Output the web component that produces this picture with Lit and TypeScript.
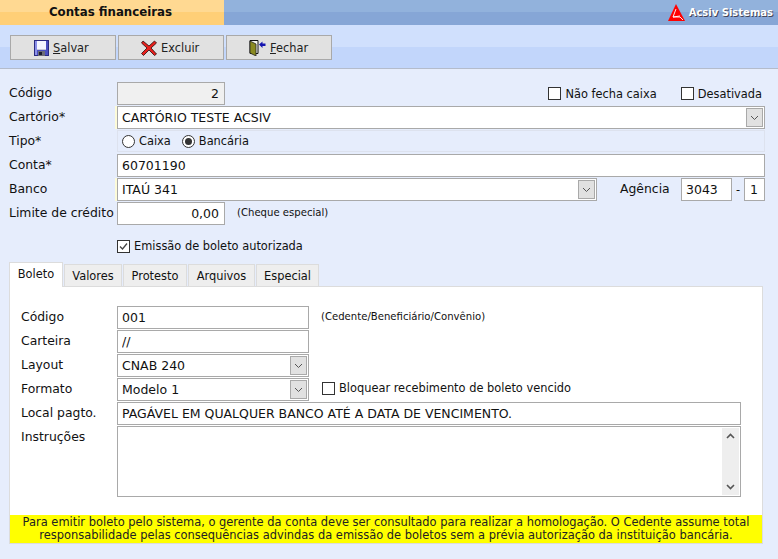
import { html, css, LitElement, svg } from 'lit';
import { customElement, state } from 'lit/decorators.js';

const chevron = html`<svg width="9" height="6" viewBox="0 0 9 6"><path d="M1 1l3.5 3.5L8 1" fill="none" stroke="#555" stroke-width="1"/></svg>`;

const saveIcon = html`<svg class="ico" width="15" height="16" viewBox="0 0 15 16">
  <rect x="0.5" y="0.5" width="14" height="15" fill="#4a4fc0" stroke="#2a2a80"/>
  <rect x="1" y="1" width="2" height="14" fill="#8a8fe8"/>
  <rect x="3" y="1" width="9" height="8" fill="#f4f6ff"/>
  <rect x="3" y="9" width="9" height="1" fill="#c8cad8"/>
  <rect x="4" y="11" width="7" height="5" fill="#6c6c78"/>
  <rect x="5" y="12" width="3" height="3" fill="#1c1c30"/>
</svg>`;

const deleteIcon = html`<svg class="ico" width="16" height="16" viewBox="0 0 16 16">
  <path d="M2 1L8 6l5.500-5 2 2L10 8l5.500 6-2 1.500L8 10l-5.500 5.500-2-2L6 8 .5 3z" fill="#e8201c" stroke="#2a0c0c" stroke-width="0.8"/>
</svg>`;

const exitIcon = html`<svg class="ico" width="17" height="16" viewBox="0 0 17 16">
  <path d="M1 0.500h8v13H1z" fill="#f6f6ee" stroke="#111"/>
  <path d="M1 1l6 3v12l-6-3z" fill="#8a8a20" stroke="#222" stroke-width="0.8"/>
  <path d="M10 4.500l3.500-3V3.500h3v2.500h-3V8z" fill="#1414b0"/>
</svg>`;

const logo = html`<svg width="17" height="17" viewBox="0 0 17 17">
  <path d="M8 0L17 17H0z" fill="#f00"/>
  ${svg`<path d="M8 5L5 13h7l3 3M5 13l7-1" fill="none" stroke="#fff" stroke-width="0.9"/>`}
</svg>`;

@customElement('app-root')
export class AppRoot extends LitElement {

  static styles = [css`
    :host {
      display: block;
      min-height: 559px;
      background: #e6edfc;
      font-family: "DejaVu Sans", Verdana, sans-serif;
      font-size: 11.4px;
      color: #111;
      overflow: hidden;
    }

    .title {
      display: flex;
      height: 25px;
      background: linear-gradient(#92b2dc 0 12px, #86a6d6 12px);
    }
    .title h1 {
      box-sizing: border-box;
      width: 224px;
      margin: 0;
      padding-right: 3px;
      font-size: 11.8px;
      font-weight: bold;
      line-height: 24px;
      text-align: center;
      background: linear-gradient(#ffd992 0 12px, #ffcf77 12px);
    }
    .brand {
      margin-left: auto;
      display: flex;
      align-items: center;
      gap: 4px;
      padding-right: 5px;
      font-weight: bold;
      color: #fff;
      text-shadow: 1px 1px 0 #445;
      font-size: 10px;
    }

    .toolbar {
      display: flex;
      gap: 2px;
      height: 44px;
      box-sizing: border-box;
      padding: 10px 10px 0;
      background: linear-gradient(#d0e0fd 0 22px, #c2d6fb 22px);
      border-bottom: 1px solid #b4bccb;
    }
    .toolbar button {
      display: flex;
      align-items: center;
      gap: 4px;
      width: 106px;
      height: 25px;
      padding: 0 0 0 22px;
      background: #e1e1e1;
      border: 1px solid #a9a9a9;
      font: inherit;
      color: #222;
    }
    .toolbar button:first-child { padding-left: 23px; }

    .form {
      display: grid;
      grid-template-columns: 108px 1fr;
      grid-auto-rows: 23px;
      row-gap: 1px;
      padding: 13px 13px 0 9px;
    }
    .lbl {
      line-height: 21px;
      font-size: 12.4px;
      white-space: nowrap;
    }
    .line {
      display: flex;
      align-items: center;
      min-width: 0;
    }

    input.f, .sel, .area {
      box-sizing: border-box;
      height: 23px;
      border: 1px solid #a9a9a9;
      background: #fff;
      font: inherit;
      font-size: 12.5px;
      color: #111;
      padding: 0 4px;
      margin: 0;
      outline: none;
      min-width: 0;
    }
    input.f { display: block; width: 100%; }
    input.num { text-align: right; padding-right: 5px; }
    input.ro { background: #f0f0f0; }
    input.code { width: 108px; flex: none; }
    input.short, .sel.short { width: 192px; flex: none; }

    .sel {
      display: flex;
      align-items: center;
      justify-content: space-between;
      padding-right: 1px;
      width: 100%;
    }
    .sel.req { box-shadow: -2px 0 0 #fdfbd8; }
    .sel i {
      display: flex;
      align-items: center;
      justify-content: center;
      box-sizing: border-box;
      width: 17px;
      height: 19px;
      background: #e1e1e1;
      border: 1px solid #a9a9a9;
    }

    .chk {
      display: inline-flex;
      align-items: center;
      gap: 4px;
      white-space: nowrap;
    }
    .box {
      box-sizing: border-box;
      width: 13px;
      height: 13px;
      border: 1px solid #333;
      background: #fff;
      display: block;
      flex: none;
    }
    .radio {
      box-sizing: border-box;
      width: 13px;
      height: 13px;
      border: 1px solid #333;
      border-radius: 50%;
      background: #fff;
      display: flex;
      align-items: center;
      justify-content: center;
      flex: none;
    }
    .radio.on::after {
      content: "";
      width: 7px;
      height: 7px;
      border-radius: 50%;
      background: #333;
    }

    .flags {
      flex: 1;
      justify-content: flex-end;
      gap: 24px;
      padding: 0 3px 0 0;
    }
    .tipo {
      box-sizing: border-box;
      height: 22px;
      gap: 11px;
      padding-left: 4px;
      border: 1px solid #dde2ee;
    }
    .banco .sel { width: 480px; flex: none; }
    .banco span.ag { margin-left: 23px; width: 61px; flex: none; font-size: 12.4px; line-height: 21px; align-self: flex-start; }
    .banco input.ag1 { width: 51px; flex: none; }
    .banco input.ag2 { width: 21px; flex: none; padding: 0 5px; }
    .banco b { font-weight: normal; width: 12px; flex: none; text-align: center; }
    .hint { font-size: 10.100px; margin-left: 12px; white-space: nowrap; align-self: flex-start; line-height: 21px; }
    .block { margin-left: 13px; }

    .auth {
      padding: 8px 0 0 117px;
      height: 26px;
      display: flex;
      align-items: center;
    }

    .tabs {
      display: flex;
      align-items: flex-end;
      gap: 1px;
      height: 24px;
      margin: 3px 0 0 9px;
      position: relative;
      z-index: 1;
    }
    .tab {
      box-sizing: border-box;
      height: 22px;
      line-height: 23px;
      text-align: center;
      background: #eee;
      border: 1px solid #dcdcdc;
      border-bottom: none;
    }
    .tab.on {
      height: 25px;
      margin-bottom: -1px;
      line-height: 22px;
      background: #fff;
    }

    .panel {
      box-sizing: border-box;
      width: 754px;
      height: 258px;
      margin-left: 9px;
      background: #fff;
      border: 1px solid #dcdcdc;
      display: flex;
      flex-direction: column;
    }
    .inner {
      flex: 1;
      display: grid;
      grid-template-columns: 96px 624px;
      grid-auto-rows: 23px;
      row-gap: 1px;
      padding: 19px 0 0 11px;
    }
    .area {
      grid-column: 2;
      height: 71px;
      padding: 0;
      display: flex;
      justify-content: flex-end;
      grid-row: span 3;
    }
    .bar {
      width: 17px;
      margin: 1px;
      background: #eee;
      display: flex;
      flex-direction: column;
      justify-content: space-between;
      align-items: center;
      padding: 5px 0;
      box-sizing: border-box;
    }
    .notice {
      background: #ff0;
      height: 28px;
      box-sizing: border-box;
      padding-top: 1px;
      text-align: center;
      line-height: 13px;
      font-size: 11.45px;
      color: #222;
    }
  `]

  @state()
  activeTab = 'Boleto';

  renderCheck(label: string, checked = false) {
    return html`<label class="chk"><span class="box">${checked ? html`<svg width="11" height="11" viewBox="0 0 11 11" style="display:block"><path d="M2 5.500l2.500 2.500L9 2.500" fill="none" stroke="#444" stroke-width="1.300"/></svg>` : ''}</span>${label}</label>`;
  }

  renderSelect(value: string, extra = '') {
    return html`<div class="sel ${extra}"><span>${value}</span><i>${chevron}</i></div>`;
  }

  render() {
    const tabs = [['Boleto', 54], ['Valores', 58], ['Protesto', 64], ['Arquivos', 67], ['Especial', 63]] as const;
    return html`
      <div class="title">
        <h1>Contas financeiras</h1>
        <div class="brand">${logo}<span>Acsiv Sistemas</span></div>
      </div>
      <div class="toolbar">
        <button>${saveIcon}<span><u>S</u>alvar</span></button>
        <button>${deleteIcon}<span>Excluir</span></button>
        <button>${exitIcon}<span><u>F</u>echar</span></button>
      </div>

      <div class="form">
        <span class="lbl">Código</span>
        <div class="line">
          <input class="f num ro code" .value=${'2'} readonly />
          <div class="line flags">
            ${this.renderCheck('Não fecha caixa')}
            ${this.renderCheck('Desativada')}
          </div>
        </div>

        <span class="lbl">Cartório*</span>
        ${this.renderSelect('CARTÓRIO TESTE ACSIV', 'req')}

        <span class="lbl">Tipo*</span>
        <div class="line tipo">
          <label class="chk"><span class="radio"></span>Caixa</label>
          <label class="chk"><span class="radio on"></span>Bancária</label>
        </div>

        <span class="lbl">Conta*</span>
        <input class="f" .value=${'60701190'} />

        <span class="lbl">Banco</span>
        <div class="line banco">
          ${this.renderSelect('ITAÚ 341', 'req')}
          <span class="ag">Agência</span>
          <input class="f ag1" .value=${'3043'} />
          <b>-</b>
          <input class="f ag2" .value=${'1'} />
        </div>

        <span class="lbl">Limite de crédito</span>
        <div class="line">
          <input class="f num code" .value=${'0,00'} />
          <span class="hint">(Cheque especial)</span>
        </div>
      </div>

      <div class="auth">${this.renderCheck('Emissão de boleto autorizada', true)}</div>

      <div class="tabs">
        ${tabs.map(([name, w]) => html`<div class="tab ${name === this.activeTab ? 'on' : ''}" style="width:${w}px">${name}</div>`)}
      </div>
      <div class="panel">
        <div class="inner">
          <span class="lbl">Código</span>
          <div class="line">
            <input class="f short" .value=${'001'} />
            <span class="hint">(Cedente/Beneficiário/Convênio)</span>
          </div>

          <span class="lbl">Carteira</span>
          <div class="line"><input class="f short" .value=${'//'} /></div>

          <span class="lbl">Layout</span>
          <div class="line"><div class="sel short"><span>CNAB 240</span><i>${chevron}</i></div></div>

          <span class="lbl">Formato</span>
          <div class="line">
            <div class="sel short"><span>Modelo 1</span><i>${chevron}</i></div>
            <span class="block">${this.renderCheck('Bloquear recebimento de boleto vencido')}</span>
          </div>

          <span class="lbl">Local pagto.</span>
          <input class="f" .value=${'PAGÁVEL EM QUALQUER BANCO ATÉ A DATA DE VENCIMENTO.'} />

          <span class="lbl">Instruções</span>
          <div class="area">
            <div class="bar">
              <svg width="9" height="6" viewBox="0 0 9 6"><path d="M1 5l3.500-3.500L8 5" fill="none" stroke="#555" stroke-width="1.600"/></svg>
              <svg width="9" height="6" viewBox="0 0 9 6"><path d="M1 1l3.500 3.500L8 1" fill="none" stroke="#555" stroke-width="1.600"/></svg>
            </div>
          </div>
        </div>
        <div class="notice">Para emitir boleto pelo sistema, o gerente da conta deve ser consultado para realizar a homologação. O Cedente assume total<br />responsabilidade pelas consequências advindas da emissão de boletos sem a prévia autorização da instituição bancária.</div>
      </div>
    `;
  }
}
